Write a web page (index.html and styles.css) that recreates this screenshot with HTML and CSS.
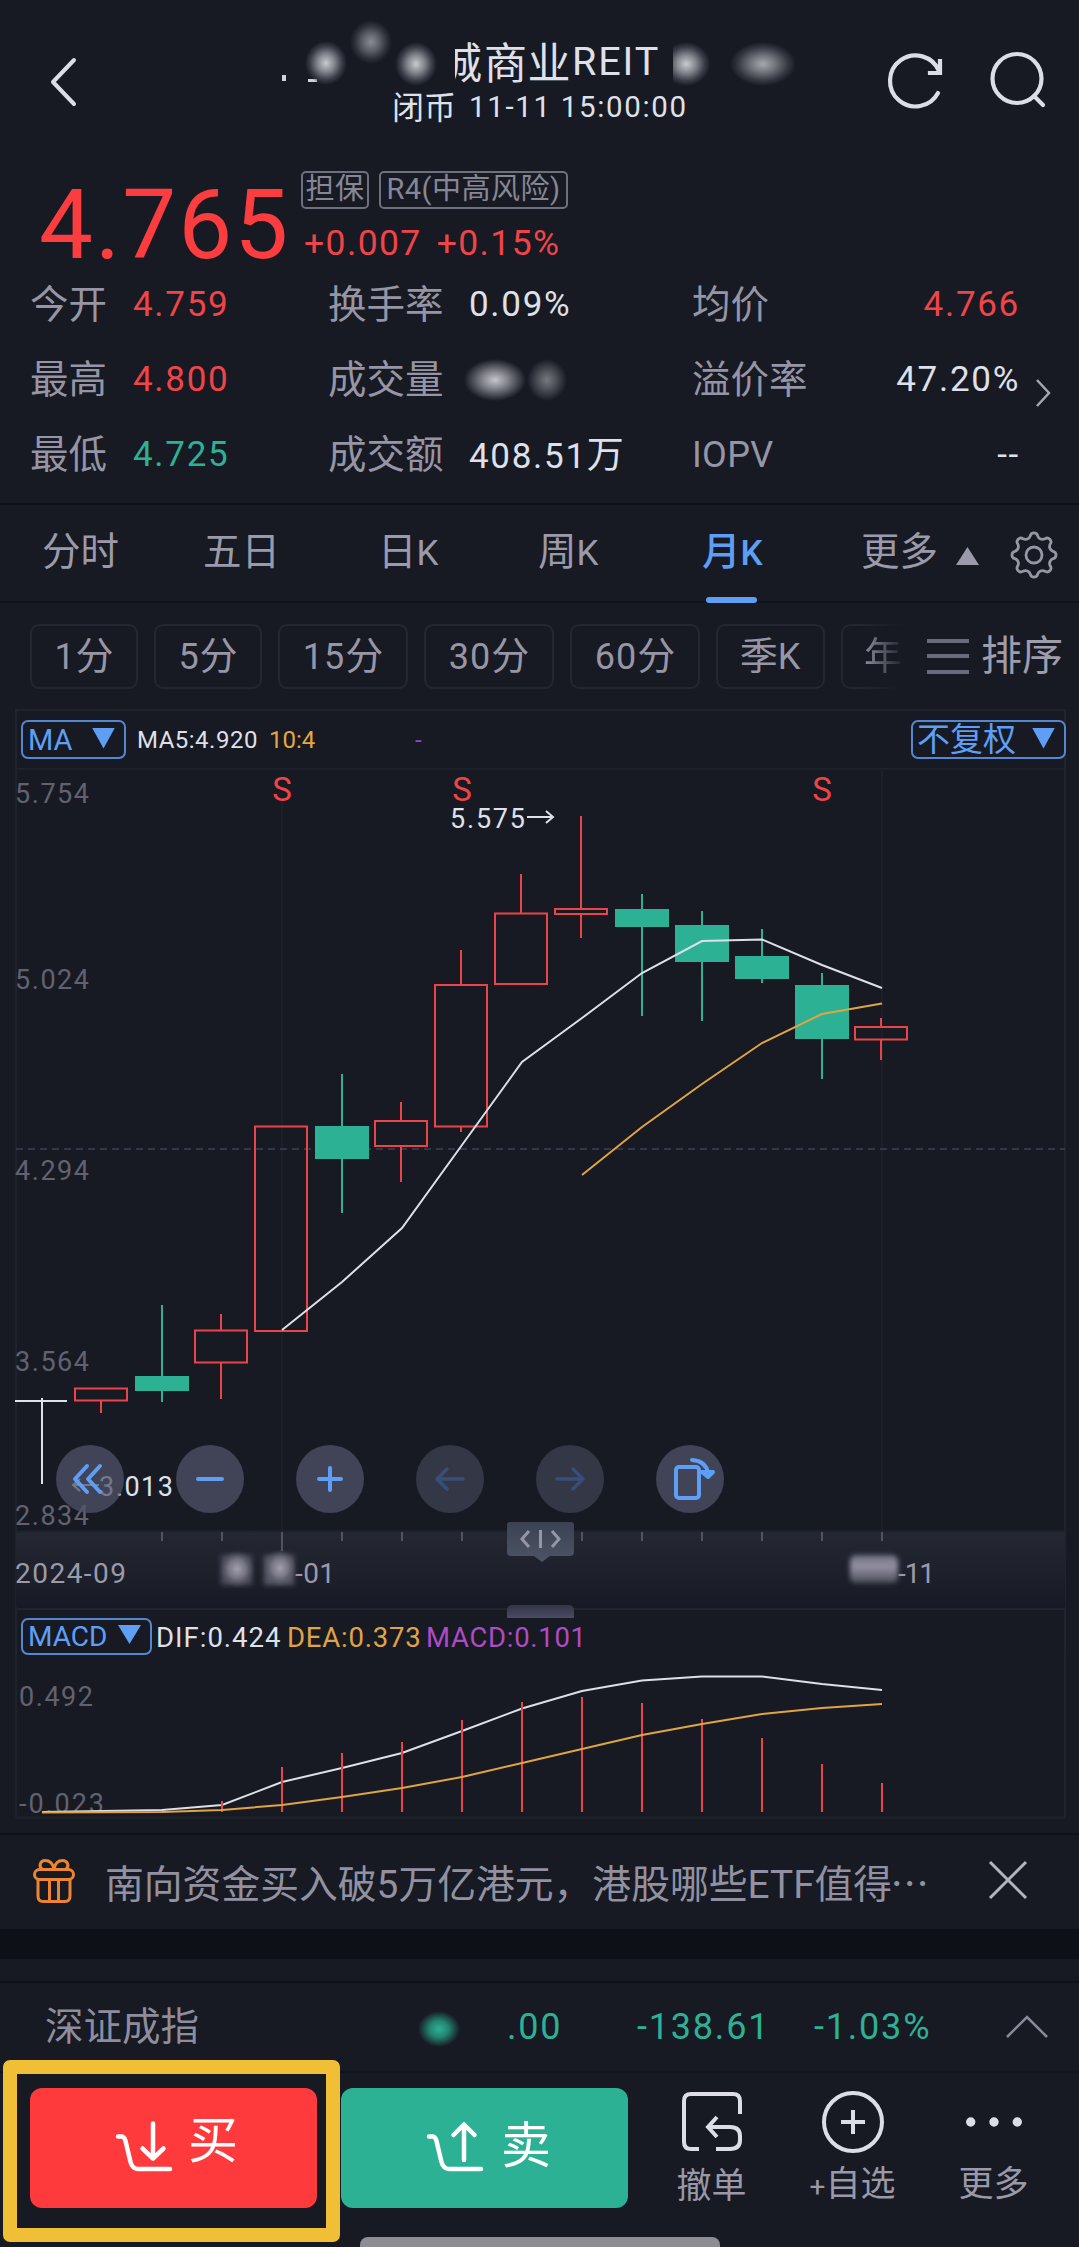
FILE: index.html
```html
<!DOCTYPE html>
<html lang="zh-CN">
<head>
<meta charset="utf-8">
<title>商业REIT</title>
<link rel="stylesheet" href="styles.css">
</head>
<body>
<header class="header">
  <svg class="back" width="40" height="60" viewBox="0 0 40 60"><path d="M26 8 5 30 26 52"/></svg>
  <div class="heading">
    <div class="title"><span class="cut">城</span><span class="name">商业</span><span class="reit">REIT</span></div>
    <div class="status"><span>闭币</span><span class="time">11-11 15:00:00</span></div>
    <i class="dot"></i><i class="dash"></i>
    <i class="smudge s1"></i><i class="smudge s2"></i><i class="smudge s3"></i><i class="smudge s4"></i><i class="smudge s5"></i>
  </div>
  <svg class="tools" width="170" height="70" viewBox="880 45 170 70">
    <path d="M938 93A25.500 25.500 0 1 1 939 71"/><path class="sq" d="M940 61V73H930"/>
    <circle cx="1017" cy="78.500" r="24.500"/><path d="m1034 96 9 9"/>
  </svg>
</header>

<section class="quote">
  <div class="price">4.765</div>
  <div class="quote-side">
    <div class="tags"><span class="tag t1">担保</span><span class="tag t2">R4(中高风险)</span></div>
    <div class="change"><span>+0.007</span><span>+0.15%</span></div>
  </div>
</section>

<section class="metrics">
  <span class="k">今开</span><span class="v red">4.759</span><span class="k">换手率</span><span class="v">0.09%</span><span class="k">均价</span><span class="v r red">4.766</span>
  <span class="k">最高</span><span class="v red">4.800</span><span class="k">成交量</span><span class="v hidden-value"><i></i><i></i></span><span class="k">溢价率</span><span class="v r">47.20%</span>
  <span class="k">最低</span><span class="v green">4.725</span><span class="k">成交额</span><span class="v wan">408.51<b>万</b></span><span class="k iopv">IOPV</span><span class="v r">--</span>
  <svg class="go" width="18" height="30" viewBox="0 0 18 30"><path d="M2 2 14 15 2 28"/></svg>
</section>

<nav class="tabs">
  <span class="tab">分时</span><span class="tab">五日</span><span class="tab">日<em>K</em></span><span class="tab">周<em>K</em></span><span class="tab active">月<em>K</em></span>
  <span class="tab more">更多<svg width="25" height="20" viewBox="0 0 25 20"><path d="M12.500 1 24 19H1z"/></svg></span>
  <svg class="gear" width="50" height="50" viewBox="-25 -25 50 50"><path d="M19.100-3.700A3.800 3.800 0 0 1 19.100 3.700A5 5 0 0 0 16.200 10.900A3.800 3.800 0 0 1 10.900 16.200A5 5 0 0 0 3.700 19.100A3.800 3.800 0 0 1-3.700 19.100A5 5 0 0 0-10.900 16.200A3.800 3.800 0 0 1-16.200 10.900A5 5 0 0 0-19.100 3.700A3.800 3.800 0 0 1-19.100-3.700A5 5 0 0 0-16.200-10.900A3.800 3.800 0 0 1-10.900-16.200A5 5 0 0 0-3.700-19.100A3.800 3.800 0 0 1 3.700-19.100A5 5 0 0 0 10.900-16.200A3.800 3.800 0 0 1 16.200-10.900A5 5 0 0 0 19.100-3.700Z"/><circle r="8"/></svg>
</nav>

<section class="periods">
  <div class="chips">
    <span class="chip">1<b>分</b></span><span class="chip">5<b>分</b></span><span class="chip w">15<b>分</b></span><span class="chip w">30<b>分</b></span><span class="chip w">60<b>分</b></span><span class="chip q"><b>季</b>K</span><span class="chip last"><b>年</b></span>
  </div>
  <div class="sort"><i></i>排序</div>
</section>

<section class="chart">
  <div class="indicators">
    <span class="select ma">MA<i></i></span><span class="ma5">MA5:4.920</span><span class="ma10">10:4</span><span class="ma20">-</span>
    <span class="select adj"><span>不复权</span><i></i></span>
  </div>
  <div class="plot">
  <svg width="1079" height="840" viewBox="0 768 1079 840">
    <defs>
      <linearGradient id="band" x1="0" y1="0" x2="0" y2="1"><stop offset="0" stop-color="#242833"/><stop offset=".6" stop-color="#1d202b"/><stop offset="1" stop-color="#171a24"/></linearGradient>
      <linearGradient id="knob" x1="0" y1="0" x2="0" y2="1"><stop offset="0" stop-color="#3b4254"/><stop offset="1" stop-color="#4d5464"/></linearGradient>
      <radialGradient id="blur"><stop offset="0" stop-color="#a09fae"/><stop offset=".5" stop-color="#747482"/><stop offset="1" stop-color="#4a4b59" stop-opacity="0"/></radialGradient>
      <linearGradient id="fade" x1="0" y1="0" x2="0" y2="1"><stop offset="0" stop-color="#6c6b7b"/><stop offset=".4" stop-color="#9493a3"/><stop offset="1" stop-color="#4a4b58"/></linearGradient>
      <filter id="soft" x="-20%" y="-20%" width="140%" height="140%"><feGaussianBlur stdDeviation="2.500"/></filter>
    </defs>
    <path class="grid" d="M16 768.500H1065M16 768V1608M1065 768V1608"/>
    <path class="grid faint" d="M282 800V1532M882 768V1532"/>
    <path class="dashline" d="M16 1149H1065"/>
    <rect x="16" y="1531" width="1049" height="76" fill="url(#band)"/>
    <path class="grid" d="M16 1531.500H1065"/>
    <path class="ticks" d="M162 1532v9M222 1532v9M282 1532v19M342 1532v9M402 1532v9M462 1532v9M582 1532v9M642 1532v9M702 1532v9M762 1532v9M822 1532v9M882 1532v9"/>
    <g class="axis">
      <text x="15" y="803" textLength="74">5.754</text><text x="15" y="989" textLength="74">5.024</text><text x="15" y="1180" textLength="74">4.294</text><text x="15" y="1371" textLength="74">3.564</text><text x="15" y="1525" textLength="74">2.834</text>
    </g>
    <g class="up">
      <path d="M101 1400V1413M221 1314V1330M221 1363V1399M401 1102V1120M401 1147V1182M461 950V985M461 1127V1132M521 874V913M581 816V908M581 915V938M881 1018V1027M881 1040V1060"/>
      <path d="M75 1388.500h52v12H75zM195 1330.500h52v32h-52zM255 1126.500h52v204.500h-52zM375 1121h52v25h-52zM435 985h52v141.500h-52zM495 913.500h52v70.500h-52zM555 909h52v5h-52zM855 1027h52v12.500h-52z"/>
    </g>
    <g class="down">
      <path d="M162 1305V1402M342 1074V1213M642 894V1016M702 911V1021M762 929V983M822 973V1079"/>
      <path class="body" d="M135 1376h54v15h-54zM315 1126h54v33h-54zM615 909h54v18h-54zM675 925h54v37h-54zM735 956h54v23h-54zM795 985h54v54h-54z"/>
    </g>
    <path class="first" d="M15 1401H67M42 1398V1484"/>
    <polyline class="white" points="282,1330 342,1282 402,1228 462,1145 522,1062 582,1018 642,973 702,941 762,939.500 822,965 882,988"/>
    <polyline class="gold" points="582,1175 642,1127 702,1084 762,1043 822,1014 882,1003.500"/>
    <g class="sell"><text x="282" y="801">S</text><text x="462" y="801">S</text><text x="822" y="801">S</text></g>
    <text class="hi" x="450" y="828" textLength="75">5.575</text><path class="arrow" d="M527 817H553M546 811l7 6-7 6"/>
    <text class="hi" x="99" y="1496" textLength="74">3.013</text><path class="arrow" d="M99 1485H73M80 1479l-7 6 7 6"/>
    <g class="dates"><text x="15" y="1583" textLength="111">2024-09</text><text x="295" y="1583" textLength="40">-01</text><text x="898" y="1583" textLength="37">-11</text></g>
    <g filter="url(#soft)"><rect x="221" y="1555" width="31" height="30" fill="#484a58"/><rect x="264" y="1555" width="30" height="30" fill="#555664"/></g>
    <ellipse cx="237" cy="1569" rx="18" ry="19" fill="url(#blur)"/><ellipse cx="280" cy="1568" rx="17" ry="19" fill="url(#blur)"/>
    <rect x="850" y="1555" width="48" height="28" rx="6" fill="url(#fade)" filter="url(#soft)"/>
    <path d="M510 1522H571Q574 1522 574 1525V1552Q574 1556 570 1556H550L542 1562 534 1556H511Q507 1556 507 1552V1525Q507 1522 510 1522Z" fill="url(#knob)"/>
    <path class="knobmark" d="M529 1531 522 1539 529 1547M540.500 1530V1548M552 1531 559 1539 552 1547"/>
  </svg>
  <div class="controls">
    <button><svg viewBox="-34 -34 68 68"><path d="M-3-13-15 0-3 13M10-13-2 0 10 13"/></svg></button>
    <button><svg viewBox="-34 -34 68 68"><path d="M-12 0H12"/></svg></button>
    <button><svg viewBox="-34 -34 68 68"><path d="M-11 0H11M0-11V11"/></svg></button>
    <button class="off"><svg viewBox="-34 -34 68 68"><path d="M13 0H-13M-3-10-13 0-3 10"/></svg></button>
    <button class="off"><svg viewBox="-34 -34 68 68"><path d="M-13 0H13M3-10 13 0 3 10"/></svg></button>
    <button><svg viewBox="-34 -34 68 68"><rect x="-14" y="-12" width="23" height="31" rx="3"/><path d="M2-19Q16-18 18-6"/><path d="M12-7H23L18-2Z"/></svg></button>
  </div>
  </div>
  <div class="macd-row">
    <span class="select macd">MACD<i></i></span><span class="dif">DIF:0.424</span><span class="dea">DEA:0.373</span><span class="bar">MACD:0.101</span>
    <i class="handle"></i>
  </div>
  <svg class="macd-plot" width="1079" height="178" viewBox="0 1655 1079 178">
    <path class="grid" d="M16 1817.500H1065M16 1655V1817M1065 1655V1817"/>
    <g class="axis"><text x="19" y="1706" textLength="74">0.492</text><text x="19" y="1813" textLength="85">-0.023</text></g>
    <polyline class="white" points="42,1812 102,1811 162,1810 222,1805 282,1782 342,1768 402,1753 462,1731 522,1708.500 582,1691 642,1680.500 702,1676.500 762,1676.500 822,1684 882,1690"/>
    <path class="bars" d="M222 1801V1812M282 1767V1812M342 1753V1812M402 1742V1812M462 1720V1812M522 1702V1812M582 1697V1812M642 1703V1812M702 1719V1812M762 1738V1812M822 1764V1812M882 1783V1812"/>
    <polyline class="gold" points="42,1812.500 162,1812 222,1810 282,1805 342,1797 402,1788 462,1777 522,1763 582,1749 642,1735 702,1724 762,1714 822,1708 882,1704"/>
  </svg>
</section>

<section class="news">
  <svg class="gift" width="44" height="46" viewBox="32 1858 44 46"><path d="M42 1869.500C38 1865 41 1860.500 45 1860.500C50 1860.500 53 1864 54 1869C55 1864 58 1860.500 62.500 1860.500C67 1860.500 70 1865 66 1869.500"/><rect x="34.500" y="1869.500" width="39" height="10" rx="5"/><path d="M38 1880V1896Q38 1901.500 43 1901.500H65Q70 1901.500 70 1896V1880M49.500 1880V1901M58.500 1880V1901"/></svg>
  <p>南向资金买入破5万亿港元，港股哪些ETF值得<span class="dots">⋯</span></p>
  <svg class="close" width="42" height="42" viewBox="0 0 42 42"><path d="m3 3 36 36M39 3 3 39"/></svg>
</section>
<div class="gap"></div>

<section class="index">
  <span class="index-name">深证成指</span><i class="ix-smudge"></i><span class="ix v1">.00</span><span class="ix v2">-138.61</span><span class="ix v3">-1.03%</span>
  <svg width="44" height="26" viewBox="0 0 44 26"><path d="M2 23 22 3 42 23"/></svg>
</section>

<footer class="actions">
  <div class="btn buy"><svg width="60" height="54" viewBox="114 2120 60 54"><path d="M118 2136.500H122Q124.500 2137 125.500 2141L130.500 2162Q132.500 2169 138 2169H170M153 2123.500V2158M142.500 2148.500 153 2158.500 163.500 2148.500"/></svg><span>买</span></div>
  <div class="btn sell-btn"><svg width="60" height="54" viewBox="114 2120 60 54"><path d="M118 2136.500H122Q124.500 2137 125.500 2141L130.500 2162Q132.500 2169 138 2169H170M153 2160V2125M142.500 2135 153 2124.500 163.500 2135"/></svg><span>卖</span></div>
  <div class="action"><svg width="64" height="64" viewBox="-32 -32 64 64"><path d="M28-8V-21Q28-28 21-28H-21Q-28-28-28-21V20Q-28 27-21 27H-13M4 27H18Q28 27 28 18V14Q28 5 18 5H-3M5-5-4 5 5 15"/></svg><span class="cancel">撤单</span></div>
  <div class="action fav"><svg width="64" height="64" viewBox="-32 -32 64 64"><circle r="29"/><path d="M-12 0H12M0-12V12"/></svg><span><small>+</small>自选</span></div>
  <div class="action"><svg width="64" height="64" viewBox="-32 -32 64 64"><path class="fill" d="M-28 0a4.700 4.700 0 1 1 9.400 0a4.700 4.700 0 1 1-9.400 0M-4.700 0a4.700 4.700 0 1 1 9.400 0a4.700 4.700 0 1 1-9.400 0M18.600 0a4.700 4.700 0 1 1 9.400 0a4.700 4.700 0 1 1-9.400 0"/></svg><span>更多</span></div>
  <i class="highlight"></i>
  <i class="home-bar"></i>
</footer>
</body>
</html>
```
FILE: styles.css
```css
* { box-sizing: border-box; }
body {
  margin: 0;
  width: 1079px;
  height: 2247px;
  overflow: hidden;
  background: #171a23;
  color: #dfe0ea;
  font-family: Roboto, "Noto Sans CJK SC", sans-serif;
  white-space: nowrap;
}
svg { display: block; fill: none; flex: none; }
b, em { font-weight: 400; font-style: normal; }
i { display: block; flex: none; }
.red { color: #f04448; }
.green { color: #2db195; }

/* header */
.header { height: 150px; display: flex; position: relative; }
.back { margin: 52px 0 0 48px; stroke: #dcdde7; stroke-width: 4; stroke-linecap: round; stroke-linejoin: round; }
.heading { position: absolute; left: 270px; top: 0; width: 540px; height: 150px; }
.title { display: flex; align-items: center; height: 50px; margin: 35px 0 0 169px; font-size: 43px; color: #dfe0ea; }
.cut { width: 45px; clip-path: inset(-10px 0 -10px 16px); }
.name { letter-spacing: .5px; width: 88px; }
.reit { font-size: 39.5px; letter-spacing: 1.9px; margin-top: 3px; }
.status { display: flex; align-items: center; height: 40px; margin: 2px 0 0 122px; font-size: 32px; }
.status span:first-child { margin-top: -4px; }
.time { font-size: 29.5px; letter-spacing: 1.65px; margin-left: 13px; }
.dot { position: absolute; left: 12px; top: 75px; width: 4px; height: 6px; background: #d0d1db; }
.dash { position: absolute; left: 38px; top: 79px; width: 9px; height: 3px; background: #d0d1db; }
.smudge { position: absolute; width: 42px; height: 44px; border-radius: 8px; background: radial-gradient(closest-side, #c9cad3, #85878f 40%, #3c3f49 75%, #171a2300); }
.s1 { left: 35px; top: 41px; }
.s2 { left: 80px; top: 20px; opacity: .65; }
.s3 { left: 125px; top: 42px; }
.s4 { left: 403px; top: 42px; width: 38px; border-radius: 0; background: radial-gradient(24px 22px at 35% 50%, #c9cad3, #85878f 40%, #3c3f49 75%, #171a2300); }
.s5 { left: 460px; top: 42px; width: 66px; background: radial-gradient(closest-side, #a8a9b2, #6f7179 40%, #363943 75%, #171a2300); }
.tools { position: absolute; left: 880px; top: 45px; stroke: #dcdde7; stroke-width: 4.200; stroke-linecap: round; }
.tools .sq { stroke-linecap: square; }

/* price */
.quote { height: 115px; display: flex; padding-left: 39px; }
.price { width: 261px; font-size: 96px; line-height: 151px; letter-spacing: 2px; color: #fb3d40; }
.tags { display: flex; gap: 10px; margin-top: 21px; }
.tag { height: 38px; line-height: 33px; border: 2px solid #6f6f7e; border-radius: 5px; font-size: 29px; color: #878695; text-align: center; letter-spacing: .5px; }
.t1 { width: 68px; margin-left: 1px; }
.t2 { width: 189px; }
.change { display: flex; gap: 15px; margin: 15px 0 0 4px; font-size: 35.500px; line-height: 38px; letter-spacing: 1.400px; color: #f04448; }

/* metrics */
.metrics { position: relative; height: 240px; border-bottom: 2px solid #0e1119; padding: 2px 0 0 30px; display: grid; grid-template: repeat(3, 75px) / 103px 195px 141px 223px 137px 191px; align-content: start; align-items: center; }
.k { font-size: 38.500px; color: #9695a5; margin-top: -8px; }
.v { font-size: 35px; letter-spacing: 1.700px; }
.v b { font-size: 37px; }
.wan { margin-top: -6px; }
.iopv { font-size: 36px; letter-spacing: .3px; margin-top: 0; }
.r { text-align: right; }
.hidden-value { display: flex; }
.hidden-value i { height: 42px; width: 62px; border-radius: 8px; margin-left: -5px; background: radial-gradient(closest-side, #c5c6cd, #85868d 40%, #44474f 75%, #171a2300); }
.hidden-value i + i { width: 40px; margin-left: 1px; opacity: .55; }
.go { position: absolute; left: 1035px; top: 113px; stroke: #a5a5b2; stroke-width: 2.500; }

/* tabs */
.tabs { position: relative; height: 98px; border-bottom: 2px solid #10131b; display: grid; grid-template-columns: 161px 175px 160px 163px 160px 145px; padding-left: 42px; line-height: 93px; font-size: 38.500px; color: #9b9aaa; }
.tab em { font-size: 35px; }
.active { position: relative; color: #5e9ff5; font-weight: 500; margin-left: 1px; }
.active em { font-weight: 500; }
.active::after { content: ""; position: absolute; left: 4px; top: 92px; width: 51px; height: 6px; border-radius: 3px; background: #5e9ff5; }
.more { display: flex; align-items: flex-start; gap: 17px; }
.more svg { fill: #9b9aaa; margin-top: 41px; }
.gear { position: absolute; left: 1009px; top: 25px; stroke: #9796a3; stroke-width: 2.800; }

/* periods */
.periods { height: 106px; display: flex; padding: 21px 0 0 30px; font-size: 36px; color: #9796a6; }
.chips { display: flex; gap: 16px; width: 880px; }
.chip { flex: none; width: 108px; height: 65px; line-height: 61px; border: 2px solid #242732; border-radius: 9px; text-align: center; letter-spacing: 1px; }
.chip b { font-size: 38px; letter-spacing: 0; }
.w { width: 130px; }
.q { width: 109px; }
.last { width: 66px; border-right: 0; border-radius: 9px 0 0 9px; padding-left: 16px; -webkit-mask-image: linear-gradient(90deg, #000 30%, transparent 98%); mask-image: linear-gradient(90deg, #000 30%, transparent 98%); }
.sort { display: flex; gap: 12px; margin-left: 17px; font-size: 41px; line-height: 64px; color: #9e9dad; }
.sort i { width: 42px; height: 35px; margin-top: 15px; background: linear-gradient(#6a6a7a 4px, transparent 4px 15px, #6a6a7a 15px 19px, transparent 19px 31px, #6a6a7a 31px); }

/* chart */
.chart { height: 1124px; }
.indicators { display: flex; align-items: center; height: 59px; margin: 0 13px 0 15px; border: 2px solid #20242e; border-bottom: 0; padding-left: 4px; font-size: 24px; }
.select { display: flex; align-items: center; justify-content: space-between; height: 39px; border: 2px solid #5387cf; border-radius: 7px; padding: 0 9px 0 5px; color: #5e9ff5; font-size: 29px; }
.select i { width: 23px; height: 21px; margin-top: -3px; background: #5e9ff5; clip-path: polygon(0 0, 100% 0, 50% 100%); }
.ma { width: 105px; }
.ma5 { width: 132px; margin-left: 11px; letter-spacing: .5px; }
.ma10 { width: 146px; color: #e4a83f; letter-spacing: 0; }
.ma20 { color: #a53fc0; }
.adj { width: 155px; font-size: 33px; margin-left: auto; margin-right: -2px; padding-left: 4px; }
.adj span { margin-top: -6px; }
.grid { stroke: #1f232d; stroke-width: 2; }
.faint { stroke: #1c2029; }
.dashline { stroke: #323647; stroke-width: 2; stroke-dasharray: 7 5; }
.ticks { stroke: #52535f; stroke-width: 2; }
.axis, .hi, .dates { font-size: 27px; }
.axis { fill: #62626f; }
.hi { fill: #dfe0ea; }
.dates { fill: #9b9aaa; font-size: 28px; }
.up, .bars { stroke: #e94448; stroke-width: 2; }
.down { stroke: #2db195; stroke-width: 2; }
.body { fill: #2db195; stroke: none; }
.first, .arrow { stroke: #dfe0ea; stroke-width: 2; }
.white { stroke: #dedfe8; stroke-width: 2; }
.gold { stroke: #e0a443; stroke-width: 2; }
.sell { fill: #f04448; font-size: 33px; text-anchor: middle; }
.knobmark { stroke: #9495a5; stroke-width: 3; }
.plot { position: relative; height: 840px; }
.controls { position: absolute; left: 56px; top: 677px; display: flex; gap: 52px; }
.controls button { width: 68px; height: 68px; border: 0; padding: 0; border-radius: 50%; background: #50536abf; }
.controls svg { width: 68px; height: 68px; stroke: #5e9ff5; stroke-width: 4; stroke-linecap: round; stroke-linejoin: round; }
.controls .off { background: #343745; }
.controls .off svg { stroke: #374f78; stroke-width: 3.500; }
.macd-row { position: relative; display: flex; align-items: center; height: 47px; margin: 0 13px 0 15px; border: 2px solid #20242e; border-bottom: 0; padding: 7px 0 0 4px; font-size: 27.500px; }
.macd { width: 131px; height: 37px; font-size: 28px; line-height: 31px; }
.macd i { height: 19px; }
.dif { margin: 2px 0 0 4px; width: 131px; letter-spacing: 1px; }
.dea { margin-top: 2px; width: 139px; color: #e0a443; letter-spacing: .8px; }
.bar { margin-top: 2px; color: #b04bc6; letter-spacing: .7px; }
.handle { position: absolute; left: 490px; top: -5px; width: 67px; height: 13px; border-radius: 5px 5px 0 0; background: linear-gradient(#323545, #494c63); }

/* news */
.news { height: 96px; border-top: 2px solid #0e1118; display: flex; align-items: center; padding: 0 50px 0 32px; }
.gift { stroke: #ec8430; stroke-width: 3; margin-top: -3px; }
.news p { margin: -3px 0 0 29px; width: 882px; font-size: 38.800px; color: #9291a1; letter-spacing: 0; }
.dots { font-family: "Noto Sans CJK SC", sans-serif; margin-left: -2px; }
.close { stroke: #b4b4c0; stroke-width: 3; margin-top: -4px; }
.gap { height: 30px; background: #0d1017; }

/* index bar */
.index { position: relative; height: 114px; border-bottom: 2px solid #10131b; display: flex; align-items: center; padding: 24px 30px 0 45px; font-size: 38.500px; color: #8e8d9e; }
.index::before { content: ""; position: absolute; left: 0; right: 0; top: 22px; height: 2px; background: #0e1118; }
.index-name { width: 373px; margin-top: -8px; }
.ix-smudge { width: 42px; height: 36px; border-radius: 6px; margin-top: 4px; background: radial-gradient(closest-side, #2db195, #238570 45%, #1c3f40 80%, #171a2300); }
.ix { font-size: 36px; letter-spacing: 1.800px; color: #2db195; }
.v1 { margin-left: 47px; width: 130px; }
.v2 { width: 177px; }
.v3 { flex: 1; }
.index svg { stroke: #8b8a98; stroke-width: 2.500; }

/* actions */
.actions { position: relative; height: 174px; display: flex; padding: 15px 0 0 30px; }
.btn { width: 287px; height: 120px; border-radius: 12px; display: flex; padding: 32px 0 0 84px; color: #fff; }
.btn svg { stroke: #fff; stroke-width: 4.500; stroke-linecap: round; stroke-linejoin: round; }
.btn span { font-size: 50px; line-height: 60px; margin: -9px 0 0 14px; }
.buy { background: #ff3a3c; }
.sell-btn { background: #2db195; margin: 0 13px 0 24px; }
.sell-btn span { margin: -4px 0 0 16px; }
.action { width: 141px; display: flex; flex-direction: column; align-items: center; color: #9a99a8; font-size: 35px; padding-top: 2px; }
.action svg { stroke: #dcdde7; stroke-width: 4; }
.action span { line-height: 50px; margin-top: 6px; }
.action .cancel { margin-top: 8px; }
.action small { font-size: 28px; }
.action .fill { fill: #dcdde7; stroke: none; }
.highlight { position: absolute; left: 3px; top: -13px; width: 337px; height: 182px; border: 14px solid #f0bf36; border-radius: 7px; }
.home-bar { position: absolute; left: 360px; top: 164px; width: 360px; height: 20px; border-radius: 8px; background: #8e8d93; }
```
